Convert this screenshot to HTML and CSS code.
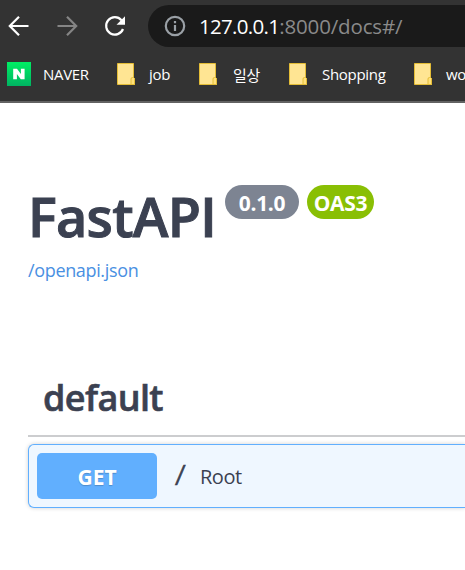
FILE: index.html
```html
<!DOCTYPE html>
<html lang="en">
<head>
<meta charset="utf-8">
<title>FastAPI - Swagger UI</title>
<link rel="stylesheet" href="styles.css">
</head>
<body>
<header class="browser">
  <div class="toolbar">
    <svg class="nav back" width="22" height="22" viewBox="0 0 22 22"><path d="M20.5 11H2M11 1.8L1.8 11l9.200 9.200"/></svg>
    <svg class="nav forward" width="22" height="22" viewBox="0 0 22 22"><path d="M1.500 11H20M11 1.800l9.200 9.200L11 20.200"/></svg>
    <svg class="nav reload" width="22" height="22" viewBox="0 0 22 22"><path d="M19 14A8.700 8.700 0 1 1 17.500 5.300"/><path class="tip" d="M21 1.200V9.700H12.500Z"/></svg>
    <div class="address">
      <svg class="info" width="22" height="22" viewBox="0 0 22 22"><circle cx="11" cy="11" r="9.200"/><path d="M11 10v6M11 6v2.200"/></svg>
      <span class="url"><span class="host">127.0.0.1</span><span class="path">:8000/docs#/</span></span>
    </div>
  </div>
  <nav class="bookmarks">
    <a class="mark naver"><svg width="24" height="24" viewBox="0 0 24 24"><defs><linearGradient id="ng" x2="0" y2="1"><stop stop-color="#00ee64"/><stop offset="1" stop-color="#00b462"/></linearGradient></defs><path fill="url(#ng)" d="M0 0h24v24H0z"/><path fill="#fff" d="M6.200 6.800h3.800l3.900 5.200V6.800h3.700v10.400h-3.800L9.900 12v5.200H6.200z"/></svg><span>NAVER</span></a>
    <a class="mark job"><svg class="folder" width="18" height="22" viewBox="0 0 18 22"><path class="sheet" d="M.5.5h16v14l1 1v6H.5z"/><path class="fold" d="M14 21v-5q0-1.500 1.500-1.500h1l1 1v6H14"/></svg><span>job</span></a>
    <a class="mark daily"><svg class="folder" width="18" height="22" viewBox="0 0 18 22"><path class="sheet" d="M.5.5h16v14l1 1v6H.5z"/><path class="fold" d="M14 21v-5q0-1.500 1.500-1.500h1l1 1v6H14"/></svg><span>일상</span></a>
    <a class="mark shopping"><svg class="folder" width="18" height="22" viewBox="0 0 18 22"><path class="sheet" d="M.5.5h16v14l1 1v6H.5z"/><path class="fold" d="M14 21v-5q0-1.500 1.500-1.500h1l1 1v6H14"/></svg><span>Shopping</span></a>
    <a class="mark work"><svg class="folder" width="18" height="22" viewBox="0 0 18 22"><path class="sheet" d="M.5.5h16v14l1 1v6H.5z"/><path class="fold" d="M14 21v-5q0-1.500 1.500-1.500h1l1 1v6H14"/></svg><span>wo</span></a>
  </nav>
</header>
<main>
  <div class="title-row">
    <h1>FastAPI</h1>
    <span class="badge version">0.1.0</span>
    <span class="badge oas">OAS3</span>
  </div>
  <a class="spec">/openapi.json</a>
  <section>
    <h2><span>default</span></h2>
    <div class="operation">
      <span class="method">GET</span>
      <span class="route">/</span>
      <span class="summary">Root</span>
    </div>
  </section>
</main>
</body>
</html>
```
FILE: styles.css
```css
* { box-sizing: border-box; }
body { margin: 0; width: 465px; height: 570px; overflow: hidden; background: #fff; color: #3b4151; font-family: "Open Sans", "Noto Sans CJK KR", sans-serif; }
svg { display: block; flex: none; }
.browser { height: 103px; background: #333; border-bottom: 2px solid #626262; overflow: hidden; }
.toolbar { display: flex; align-items: center; height: 52px; padding-left: 8px; }
.nav { fill: none; stroke: #fff; stroke-width: 2.2; }
.forward { margin-left: 26px; stroke: #858585; }
.reload { margin-left: 26px; }
.reload .tip { fill: #fff; stroke: none; }
.address { display: flex; align-items: center; flex: 1; height: 42px; margin-left: 22px; padding-left: 16px; border-radius: 21px 0 0 21px; background: #1a1a1a; }
.info { fill: none; stroke: #9aa0a6; stroke-width: 2.2; }
.url { margin-left: 13px; font-size: 20.5px; line-height: 42px; white-space: nowrap; color: #fff; }
.host { letter-spacing: -.7px; }
.path { letter-spacing: -.15px; color: #8a8a8a; }
.bookmarks { display: flex; align-items: center; height: 44px; padding-left: 7px; color: #fff; font-size: 15px; letter-spacing: -.3px; white-space: nowrap; }
.mark { display: flex; align-items: center; flex: none; gap: 14px; height: 24px; }
.naver { width: 110px; gap: 12px; }
.job { width: 82px; }
.daily { width: 90px; gap: 16px; }
.shopping { width: 125px; gap: 15px; }
.work { width: 51px; overflow: hidden; }
.sheet { fill: #ffe593; stroke: #e4bd36; }
.fold { fill: #ffe07a; stroke: #e4bd36; }
main { padding: 82px 0 0 28px; width: 465px; }
.title-row { display: flex; align-items: flex-start; height: 70px; }
h1 { margin: 0; width: 197px; font-size: 54px; line-height: 62px; font-weight: 600; letter-spacing: -.75px; -webkit-text-stroke: 1px #3b4151; }
.badge { height: 34px; border-radius: 17px; color: #fff; font-size: 21px; line-height: 36px; font-weight: 700; letter-spacing: -.3px; text-align: center; }
.version { width: 74px; background: #7d8492; }
.oas { width: 67px; margin-left: 8px; background: #89bf04; }
.spec { display: block; height: 30px; font-size: 18px; line-height: 30px; letter-spacing: -.35px; color: #4990e2; }
h2 { display: flex; align-items: center; height: 77px; margin: 75px 0 7px; padding-left: 15px; border-bottom: 2px solid #cccdcf; font-size: 36px; line-height: 75px; font-weight: 600; letter-spacing: -.6px; -webkit-text-stroke: .6px #3b4151; }
.operation { display: flex; align-items: center; height: 64px; padding-left: 8px; border: 1px solid #61affe; border-right: 0; border-radius: 6px 0 0 6px; background: #eff7ff; box-shadow: 0 0 4px rgba(0,0,0,.19); }
.method { width: 120px; height: 46px; border-radius: 5px; background: #61affe; color: #fff; font-size: 21px; line-height: 48px; font-weight: 700; text-align: center; text-shadow: 0 1px 1px rgba(0,0,0,.2); }
.route { width: 25px; margin: 4px 0 0 17px; font-family: "Liberation Mono", monospace; font-size: 28px; line-height: 40px; -webkit-text-stroke: .7px #3b4151; transform: scaleX(.75); transform-origin: left; }
.summary { margin-left: 1px; font-size: 20px; letter-spacing: -.5px; }
```
